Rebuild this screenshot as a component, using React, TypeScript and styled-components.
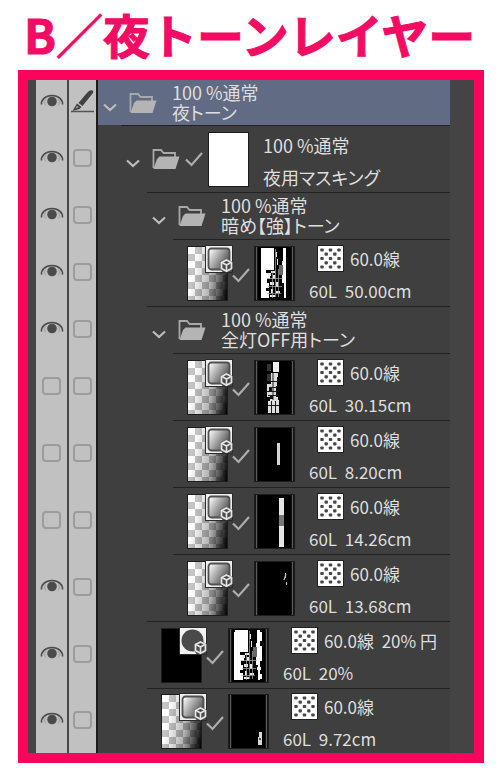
import React from 'react';
import styled, { createGlobalStyle } from 'styled-components';

const GlobalStyle = createGlobalStyle`
  * { box-sizing: border-box; }
  body {
    margin: 0;
    background: #fff;
    font-family: "Noto Sans CJK JP", sans-serif;
  }
`;

const Page = styled.main`
  padding: 0 16px 14px 18px;
`;

const Title = styled.h1`
  margin: 0;
  height: 70px;
  padding-left: 6px;
  font-size: 47px;
  font-weight: 700;
  line-height: 68px;
  white-space: nowrap;
  color: #f30b64;
  -webkit-text-stroke: 1px #f30b64;
`;

const Frame = styled.section`
  border: 10px solid #fd045c;
  background: #444;
`;

const LayerList = styled.ul`
  list-style: none;
  margin: 0;
  padding: 0 24px 0 8px;
`;

const Row = styled.li<{ $height: number }>`
  display: flex;
  height: ${(p) => p.$height}px;
`;

const Toggle = styled.label<{ $edit?: boolean }>`
  flex: none;
  display: flex;
  align-items: center;
  justify-content: center;
  width: ${(p) => (p.$edit ? 29 : 33)}px;
  padding-bottom: 3px;
  background: #c1c1c1;
  border-right: 2px solid ${(p) => (p.$edit ? '#1c1c1c' : '#484848')};

  svg { display: none; }
  input:checked { display: none; }
  input:checked + svg { display: block; }
`;

const Check = styled.input`
  appearance: none;
  width: 19px;
  height: 18px;
  margin: 2px 0 0;
  border: 2px solid #9c9c9c;
  border-radius: 4px;
`;

const Tree = styled.div<{ $depth: number; $selected?: boolean }>`
  flex: 1;
  min-width: 0;
  display: flex;
  padding-left: ${(p) => [0, 23, 49, 75][p.$depth]}px;
  background: ${(p) => (p.$selected ? '#616c84' : '#3f3f3f')};
`;

const Item = styled.div<{ $kind: 'folder' | 'tone'; $lined: boolean }>`
  flex: 1;
  min-width: 0;
  display: flex;
  align-items: center;
  padding-left: ${(p) => (p.$kind === 'folder' ? 5 : 14)}px;
  border-top: 1px solid ${(p) => (p.$lined ? '#222' : 'transparent')};
`;

const Expander = styled.button`
  flex: none;
  display: flex;
  width: 26px;
  padding: 8px 0 0;
  border: 0;
  background: none;
`;

const FolderSlot = styled.span`
  flex: none;
  display: flex;
  width: 28px;
`;

const CheckSlot = styled.span<{ $wide?: boolean }>`
  flex: none;
  display: flex;
  justify-content: center;
  width: ${(p) => (p.$wide ? 28 : 26)}px;
  padding-top: ${(p) => (p.$wide ? 0 : 4)}px;
`;

const Thumb = styled.span<{ $fill: 'tone' | 'black' | 'white' | 'mask' }>`
  flex: none;
  position: relative;
  width: 41px;
  height: 55px;
  border: 1px solid #1d1d1d;
  background: ${(p) =>
    ({
      tone: `linear-gradient(100deg, transparent 20%, rgba(0, 0, 0, 0.3) 60%, #000 100%),
        repeating-conic-gradient(#c4c4c4 0 25%, #fff 0 50%) 0 0 / 14px 14px`,
      black: '#000',
      white: '#fff',
      mask: '#000',
    })[p.$fill]};
`;

const Badge = styled.span`
  position: absolute;
  top: -2px;
  right: -6px;
  display: flex;
`;

const Info = styled.div<{ $kind: 'folder' | 'tone' | 'masked' }>`
  display: flex;
  flex-direction: column;
  gap: ${(p) => (p.$kind === 'folder' ? 0 : 9)}px;
  padding-left: ${(p) => (p.$kind === 'folder' ? 15 : 14)}px;
  padding-bottom: ${(p) => (p.$kind === 'folder' ? 3 : 0)}px;
  font-size: ${(p) => (p.$kind === 'tone' ? 17 : 18)}px;
`;

const Line = styled.span<{ $tall?: boolean; $indent?: number }>`
  display: flex;
  align-items: center;
  gap: 6px;
  height: ${(p) => (p.$tall ? 27 : 20)}px;
  padding-left: ${(p) => p.$indent ?? 0}px;
  line-height: 20px;
  font-feature-settings: "palt";
  white-space: pre;
  color: #dedede;
`;

const EyeIcon = () => (
  <svg width="24" height="16" viewBox="0 0 24 16" fill="none" stroke="#4b4b4b">
    <path d="M1.500 11.500C1 7 5 2.500 12 2.500S23 7 22.500 11.500" strokeWidth="1.600" />
    <path d="M5.500 6.500C4 9 4.500 11 6 12.500M18.500 6.500C20 9 19.500 11 18 12.500" stroke="#9a9a9a" strokeWidth="1" />
    <circle cx="12" cy="8.500" r="4.800" fill="#4b4b4b" stroke="none" />
  </svg>
);

const PenIcon = () => (
  <svg width="24" height="24" viewBox="0 0 24 24">
    <path d="M18 2c3-2 5.500 0 3.500 2.500L11.500 17l-4-3L15 5z" fill="#414141" />
    <path d="M6 14.500l4.500 3.500-2 2L1.500 22z" fill="#414141" />
    <path d="M6 16.800l1.500 1.400-2.800 1.300z" fill="#b5b5b5" />
    <path d="M0 22.500h23" stroke="#555" strokeWidth="1.500" />
  </svg>
);

const ChevronIcon = () => (
  <svg width="14" height="9" viewBox="0 0 14 9" fill="none" stroke="#bdbdbd" strokeWidth="2.200">
    <path d="M1 1.500l6 5.500 6-5.500" />
  </svg>
);

const FolderIcon = () => (
  <svg width="28" height="22" viewBox="0 0 28 22">
    <path d="M1.500 20V2h7.500l2.500 3H23v4" fill="none" stroke="#a9a9a9" strokeWidth="1.800" />
    <path d="M7.500 8.500H27.500L23.500 21H1.500L5 11z" fill="#b4b4b4" />
  </svg>
);

const TickIcon = () => (
  <svg width="18" height="15" viewBox="0 0 18 15" fill="none" stroke="#adadad" strokeWidth="2.200">
    <path d="M1 7.500l5.500 5.500L17 1" />
  </svg>
);

const Cube = () => (
  <g>
    <path d="M22 14l5 2.500V27H17.500L15.500 24v-7.500z" fill="#4a4a4a" />
    <path d="M21.500 15l5 2.500v6l-5 2.800-5-2.800v-6z" fill="#4a4a4a" stroke="#e4e4e4" strokeWidth="1.800" />
    <path d="M17 17.500l4.500 2.500 4.500-2.500M21.500 20v6" fill="none" stroke="#e4e4e4" strokeWidth="1.600" />
  </g>
);

const GradientBadge = () => (
  <svg width="28" height="28" viewBox="0 0 28 28">
    <defs>
      <linearGradient id="badgeShade" x1="0" y1="0" x2="1" y2="0.600">
        <stop offset="0.100" stopColor="#f4f4f4" />
        <stop offset="1" stopColor="#4c4c4c" />
      </linearGradient>
    </defs>
    <rect width="28" height="28" fill="#2b2b2b" />
    <rect x="1" y="1" width="26" height="26" fill="#efefef" />
    <rect x="3.500" y="3.500" width="21" height="21" rx="3" fill="url(#badgeShade)" stroke="#505050" strokeWidth="1.800" />
    <Cube />
  </svg>
);

const CircleBadge = () => (
  <svg width="28" height="28" viewBox="0 0 28 28">
    <rect width="28" height="28" fill="#2b2b2b" />
    <rect x="1" y="1" width="26" height="26" fill="#f2f2f2" />
    <circle cx="13.500" cy="13.500" r="11" fill="#4a4a4a" />
    <Cube />
  </svg>
);

const dots = [5, 9.2, 13.5, 17.8, 22];

const PatternIcon = () => (
  <svg width="27" height="27" viewBox="0 0 27 27">
    <rect width="27" height="27" fill="#222" />
    <rect x="1" y="1" width="25" height="25" fill="#fff" />
    {dots.map((y, r) =>
      dots.map((x, c) =>
        (r + c) % 2 === 0 ? (
          <rect key={`${x}-${y}`} x={x - 1.7} y={y - 1.6} width="3.400" height="3.200" rx="0.800" fill="#474747" />
        ) : null,
      ),
    )}
  </svg>
);

type MaskName = 'city' | 'tower' | 'dash' | 'beam' | 'spark' | 'cityWide' | 'lamp';

const City = () => (
  <>
    <path d="M6 1h13v22h-4v10h-1v18H6z" fill="#fff" />
    <path d="M28 1h3v50h-2V36h-2V14h1z" fill="#fff" />
    <path d="M24 18h4v10h-4z" fill="#666" />
    <path
      d="M13 26h3v3h-3zM16 24h4v2h-4zM18 28h2v4h-2zM15 35h4v3h-4zM21 35h2v5h-2zM16 42h2v4h-2zM21 44h4v2h-4zM15 48h5v2h-5zM22 12h1v6h-1zM21 5h1v5h-1z"
      fill="#e8e8e8"
    />
    <path
      d="M20.500 2v48M23.500 22v28M17.500 24v27M12 31.500h16M13 39.500h14M12 46.500h14"
      stroke="#aaa"
      strokeWidth="0.700"
      fill="none"
    />
    <path d="M11 23h4v3h-4zM12 32h3v4h-3zM11 41h3v3h-3z" fill="#000" />
  </>
);

const maskArt: Record<MaskName, React.ReactNode> = {
  city: <City />,
  cityWide: (
    <>
      <City />
      <path d="M5 3h4v48H5zM29 3h4v9h-2v5h2v15h-3v-6h-2V14h1zM28 38h4v3h-4zM29 45h4v5h-4z" fill="#fff" />
    </>
  ),
  tower: (
    <>
      <path d="M12 3h4v7h-4zM12 13h5v7h-5z" fill="#333" />
      <path d="M18 1h6v10h-6z" fill="#eee" />
      <path d="M16 12h7v4h-1v9h-1v11h2v3h1v13H13V40h2v-4h-3V23h4z" fill="#dcdcdc" />
      <path
        d="M18 12v27M12 30.500h10M13 34.500h9M14 26.500h8M13 44.500h11M16.500 40v12M20.500 40v12M16 20.500h7"
        stroke="#1c1c1c"
        strokeWidth="1"
      />
      <path d="M14 27h3v3h-3zM15 35h3v3h-3z" fill="#111" />
    </>
  ),
  dash: <path d="M22 15h3v22h-3z" fill="#d6d6d6" />,
  beam: (
    <>
      <path d="M24 3h5v49h-5z" fill="#e6e6e6" />
      <path d="M24 20h5v11h-5z" fill="#777" />
    </>
  ),
  spark: <path d="M29 18l2-6M30.500 11v5M31.500 20v3" stroke="#bbb" strokeWidth="1.200" fill="none" />,
  lamp: (
    <>
      <path d="M30 37h3v5h-3zM29 42h4v8h-4z" fill="#d8d8d8" />
      <path d="M30 43h2v2h-2z" fill="#555" />
    </>
  ),
};

const MaskPicture = ({ name }: { name: MaskName }) => (
  <svg width="39" height="53" viewBox="0 0 39 53">
    <path d="M1.500 0v53M37.500 0v53" stroke="#5a5a5a" strokeWidth="1.500" />
    {maskArt[name]}
  </svg>
);

interface Layer {
  id: string;
  kind: 'folder' | 'tone';
  depth: number;
  height: number;
  visible: boolean;
  selected?: boolean;
  first: string;
  second: string;
  whiteMask?: boolean;
  mask?: MaskName;
  circle?: boolean;
}

const layers: Layer[] = [
  { id: 'a', kind: 'folder', depth: 0, height: 45, visible: true, selected: true, first: '100 %通常', second: '夜トーン' },
  { id: 'b', kind: 'folder', depth: 1, height: 67, visible: true, first: '100 %通常', second: '夜用マスキング', whiteMask: true },
  { id: 'c', kind: 'folder', depth: 2, height: 47, visible: true, first: '100 %通常', second: '暗め【強】トーン' },
  { id: 'd', kind: 'tone', depth: 3, height: 67, visible: true, first: '60.0線', second: '60L  50.00cm', mask: 'city' },
  { id: 'e', kind: 'folder', depth: 2, height: 47, visible: true, first: '100 %通常', second: '全灯OFF用トーン' },
  { id: 'f', kind: 'tone', depth: 3, height: 67, visible: false, first: '60.0線', second: '60L  30.15cm', mask: 'tower' },
  { id: 'g', kind: 'tone', depth: 3, height: 67, visible: false, first: '60.0線', second: '60L  8.20cm', mask: 'dash' },
  { id: 'h', kind: 'tone', depth: 3, height: 67, visible: false, first: '60.0線', second: '60L  14.26cm', mask: 'beam' },
  { id: 'i', kind: 'tone', depth: 3, height: 67, visible: true, first: '60.0線', second: '60L  13.68cm', mask: 'spark' },
  { id: 'j', kind: 'tone', depth: 2, height: 67, visible: true, first: '60.0線  20% 円', second: '60L  20%', mask: 'cityWide', circle: true },
  { id: 'k', kind: 'tone', depth: 2, height: 65, visible: true, first: '60.0線', second: '60L  9.72cm', mask: 'lamp' },
];

const FolderItem = ({ layer }: { layer: Layer }) => (
  <Item $kind="folder" $lined={layer.depth > 0}>
    <Expander aria-label={layer.second} aria-expanded="true">
      <ChevronIcon />
    </Expander>
    <FolderSlot>
      <FolderIcon />
    </FolderSlot>
    {layer.whiteMask && (
      <>
        <CheckSlot $wide>
          <TickIcon />
        </CheckSlot>
        <Thumb $fill="white" />
      </>
    )}
    <Info $kind={layer.whiteMask ? 'masked' : 'folder'}>
      <Line $tall={layer.whiteMask}>{layer.first}</Line>
      <Line>{layer.second}</Line>
    </Info>
  </Item>
);

const ToneItem = ({ layer }: { layer: Layer }) => (
  <Item $kind="tone" $lined>
    <Thumb $fill={layer.circle ? 'black' : 'tone'}>
      <Badge>{layer.circle ? <CircleBadge /> : <GradientBadge />}</Badge>
    </Thumb>
    <CheckSlot>
      <TickIcon />
    </CheckSlot>
    <Thumb $fill="mask">{layer.mask && <MaskPicture name={layer.mask} />}</Thumb>
    <Info $kind="tone">
      <Line $tall $indent={8}>
        <PatternIcon />
        {layer.first}
      </Line>
      <Line>{layer.second}</Line>
    </Info>
  </Item>
);

export default function App() {
  return (
    <>
      <GlobalStyle />
      <Page>
        <Title>B／夜トーンレイヤー</Title>
        <Frame>
          <LayerList>
            {layers.map((layer) => (
              <Row key={layer.id} $height={layer.height}>
                <Toggle>
                  <Check type="checkbox" defaultChecked={layer.visible} aria-label={`${layer.second} 表示`} />
                  <EyeIcon />
                </Toggle>
                <Toggle $edit>
                  <Check type="checkbox" defaultChecked={layer.selected} aria-label={`${layer.second} 編集`} />
                  <PenIcon />
                </Toggle>
                <Tree $depth={layer.depth} $selected={layer.selected}>
                  {layer.kind === 'folder' ? <FolderItem layer={layer} /> : <ToneItem layer={layer} />}
                </Tree>
              </Row>
            ))}
          </LayerList>
        </Frame>
      </Page>
    </>
  );
}
